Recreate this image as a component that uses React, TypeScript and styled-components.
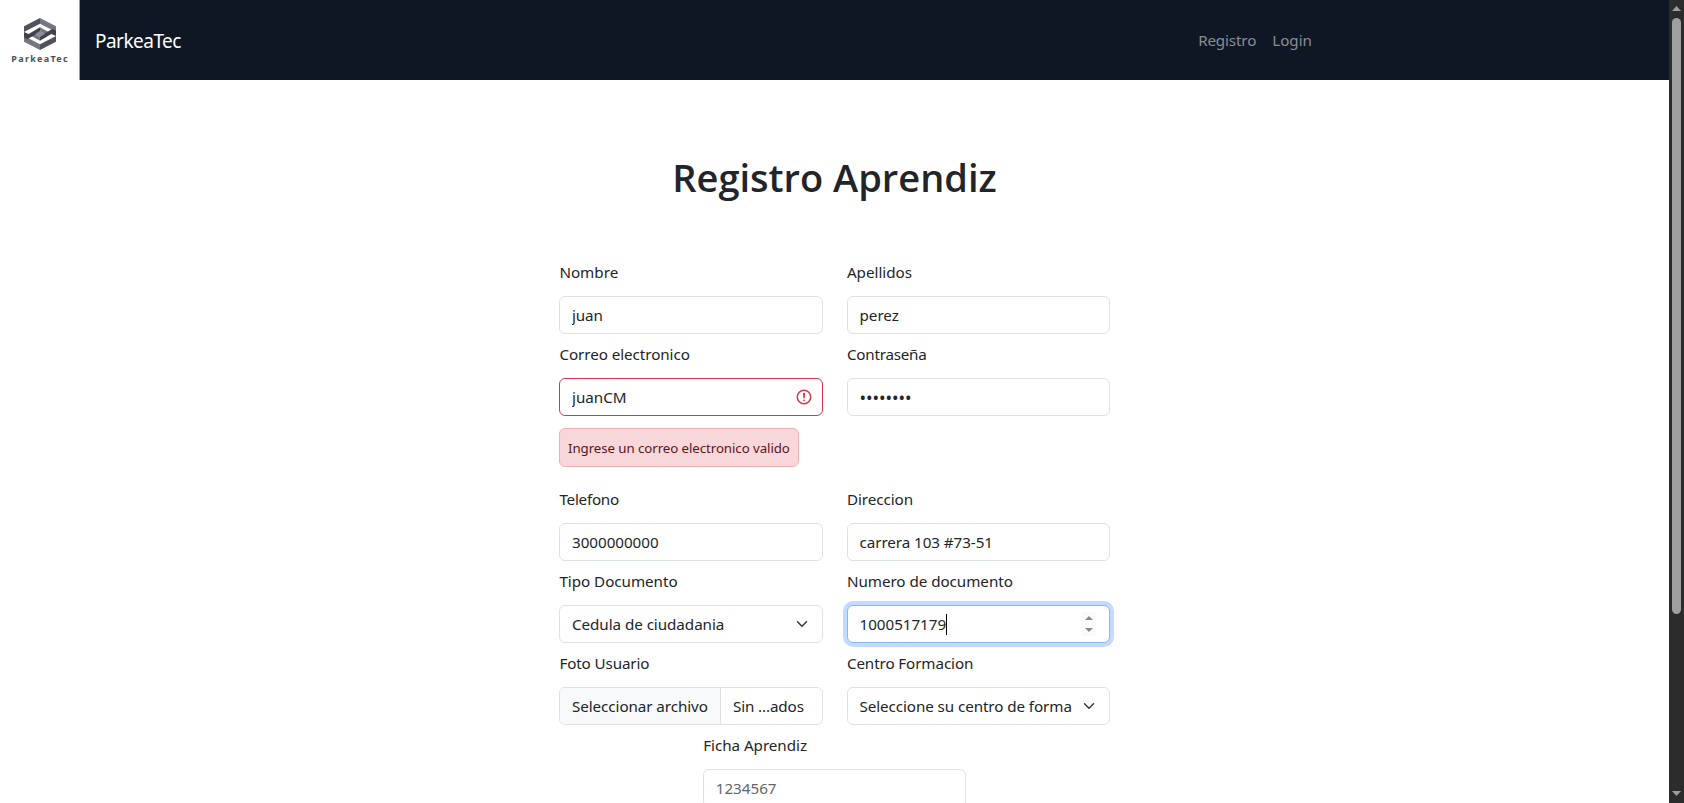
import React from 'react';
import styled, { createGlobalStyle, css } from 'styled-components';

const GlobalStyle = createGlobalStyle`
  *, *::before, *::after { box-sizing: border-box; }
  html, body { margin: 0; height: 803px; overflow: hidden; background: #fff; }
  body {
    font-family: "Noto Sans", "Open Sans", sans-serif;
    font-size: 15.2px;
    line-height: 24px;
    color: #212529;
  }
`;

const Window = styled.div`
  display: grid;
  grid-template-columns: 1fr 15px;
  height: 803px;
  overflow: hidden;
`;

const Page = styled.div`
  height: 803px;
  overflow: hidden;
  background: #fff;
`;

const Navbar = styled.header`
  display: flex;
  align-items: center;
  height: 80px;
  background: #101724;
`;

const Logo = styled.a`
  display: flex;
  flex-direction: column;
  align-items: center;
  width: 80px;
  height: 80px;
  padding-top: 18px;
  background: #fff;
  border-right: 1px solid #9a9da3;
`;

const LogoName = styled.span`
  margin-top: 2px;
  font-size: 9px;
  line-height: 14px;
  font-weight: 700;
  color: #4b4e57;
  letter-spacing: 1.3px;
  margin-right: -1.3px;
`;

const Tracked = styled.span<{ $track?: number }>`
  letter-spacing: ${(p) => p.$track ?? 0}px;
  white-space: pre;
`;

const Brand = styled.a`
  margin-left: 15px;
  padding-top: 2px;
  font-size: 19px;
  line-height: 30px;
  color: #fff;
`;

const Nav = styled.nav`
  display: flex;
  gap: 16px;
  margin-left: auto;
  margin-right: 357px;
`;

const NavLink = styled.a`
  color: #898d93;
`;

const Title = styled.h1`
  margin: 73px 0 59px;
  font-family: "Open Sans", "Noto Sans", sans-serif;
  font-size: 38px;
  line-height: 48px;
  font-weight: 600;
  text-align: center;
`;

const Form = styled.form`
  display: flex;
  flex-wrap: wrap;
  justify-content: center;
  align-items: flex-start;
  column-gap: 24px;
  width: 551px;
  margin: 0 auto;
`;

const Field = styled.div`
  display: flex;
  flex-direction: column;
  width: 263.5px;
  padding-bottom: 8px;
`;

const Label = styled.label`
  margin-bottom: 12px;
  padding-left: 0.4px;
`;

type State = 'normal' | 'invalid' | 'focused';

const Control = styled.div<{ $state?: State; $muted?: boolean }>`
  display: flex;
  align-items: center;
  height: 38px;
  padding: 0 12px;
  border: 1px solid #dee2e6;
  border-radius: 6px;
  background: #fff;
  color: ${(p) => (p.$muted ? '#62676c' : '#212529')};
  overflow: hidden;
  ${(p) => p.$state === 'invalid' && css`
    border-color: #dc3545;
    padding-right: 9px;
  `}
  ${(p) => p.$state === 'focused' && css`
    border-color: #86b7fe;
    box-shadow: 0 0 0 4px #c2dbfe;
  `}
`;

const Value = styled.div<{ $masked?: boolean }>`
  display: flex;
  align-items: center;
  flex: 1;
  min-width: 0;
  overflow: hidden;
  height: 24px;
  ${(p) => p.$masked && css`font-size: 17.4px;`}
`;

const Caret = styled.i`
  width: 1px;
  height: 21px;
  background: #000;
`;

const Spinner = styled.div`
  display: flex;
  flex-direction: column;
  align-items: center;
  justify-content: center;
  gap: 8px;
  width: 15px;
  height: 24px;
  margin-right: 1px;
  background: #fafafa;
`;

const Arrow = styled.i<{ $down?: boolean; $color: string }>`
  border: 4px solid transparent;
  ${(p) => (p.$down
    ? css`border-top-color: ${p.$color}; border-bottom-width: 0;`
    : css`border-bottom-color: ${p.$color}; border-top-width: 0;`)}
`;

const FileButton = styled.span`
  align-self: stretch;
  display: flex;
  align-items: center;
  width: 161px;
  margin: 0 12px 0 -12px;
  padding-left: 12px;
  flex: none;
  background: #f8f9fa;
  border-right: 1px solid #dee2e6;
`;

const Alert = styled.div`
  display: flex;
  align-items: center;
  width: 240px;
  height: 39px;
  margin: 12px 0;
  padding: 0 8px;
  border: 1px solid #f1aeb5;
  border-radius: 6px;
  background: #f8d7da;
  color: #58151c;
  font-size: 13.3px;
`;

const Scrollbar = styled.div`
  display: flex;
  flex-direction: column;
  align-items: center;
  height: 803px;
  padding: 6px 0 7px;
  background: #2c2c2c;
`;

const Thumb = styled.div`
  width: 9px;
  height: 596px;
  margin: 7px 0 auto;
  border-radius: 5px;
  background: #9f9f9f;
`;

const ScrollArrow = styled.svg`
  display: block;
  width: 9px;
  height: 5px;
  fill: #9f9f9f;
`;

function LogoMark() {
  return (
    <svg width="32" height="32" viewBox="0 0 96 96">
      <polygon points="48,0 0,25 0,42 48,17" fill="#50535d" />
      <polygon points="48,0 96,25 96,42 48,17" fill="#74777f" />
      <polygon points="0,54 48,79 48,96 0,71" fill="#74777f" />
      <polygon points="96,54 48,79 48,96 96,71" fill="#50535d" />
      <polygon points="48,28 78,44 66,50 48,40" fill="#74777f" />
      <polygon points="48,68 18,52 30,46 48,56" fill="#74777f" />
      <polygon points="0,42 14,48 48,28 48,42 10,64 0,58" fill="#40434e" />
      <polygon points="96,54 82,48 48,68 48,54 86,32 96,38" fill="#40434e" />
      <polygon points="48,39 62,48 48,57 34,48" fill="#8b8d94" />
    </svg>
  );
}

function Chevron() {
  return (
    <svg width="16" height="12" viewBox="0 0 16 16">
      <path d="m2 5 6 6 6-6" fill="none" stroke="#343a40" strokeWidth="2" strokeLinecap="round" strokeLinejoin="round" />
    </svg>
  );
}

function ErrorMark() {
  return (
    <svg width="18" height="18" viewBox="0 0 12 12" fill="none" stroke="#dc3545">
      <circle cx="6" cy="6" r="4.5" />
      <path strokeLinejoin="round" d="M5.8 3.6h.4L6 6.5z" />
      <circle cx="6" cy="8.2" r=".6" fill="#dc3545" stroke="none" />
    </svg>
  );
}

type FieldProps = {
  label: string;
  labelTrack?: number;
  value: string;
  track?: number;
  state?: State;
  muted?: boolean;
  masked?: boolean;
  before?: React.ReactNode;
  caret?: boolean;
  after?: React.ReactNode;
  note?: React.ReactNode;
};

function FormField({ label, labelTrack, value, track, state, muted, masked, before, caret, after, note }: FieldProps) {
  return (
    <Field>
      <Label><Tracked $track={labelTrack}>{label}</Tracked></Label>
      <Control $state={state} $muted={muted}>
        {before}
        <Value $masked={masked}>
          <Tracked $track={track}>{value}</Tracked>
          {caret && <Caret />}
        </Value>
        {after}
      </Control>
      {note}
    </Field>
  );
}

export default function App() {
  return (
    <Window>
      <GlobalStyle />
      <Page>
        <Navbar>
          <Logo>
            <LogoMark />
            <LogoName>ParkeaTec</LogoName>
          </Logo>
          <Brand><Tracked $track={-0.52}>ParkeaTec</Tracked></Brand>
          <Nav>
            <NavLink><Tracked $track={-0.14}>Registro</Tracked></NavLink>
            <NavLink>Login</NavLink>
          </Nav>
        </Navbar>
        <main>
          <Title>Registro Aprendiz</Title>
          <Form>
            <FormField label="Nombre" value="juan" track={-0.1} />
            <FormField label="Apellidos" value="perez" />
            <FormField
              label="Correo electronico"
              labelTrack={-0.06}
              value="juanCM"
              state="invalid"
              after={<ErrorMark />}
              note={<Alert><Tracked $track={-0.08}>Ingrese un correo electronico valido</Tracked></Alert>}
            />
            <FormField label="Contraseña" labelTrack={-0.22} value="••••••••" track={-0.05} masked />
            <FormField label="Telefono" labelTrack={-0.23} value="3000000000" track={-0.03} />
            <FormField label="Direccion" labelTrack={-0.05} value="carrera 103 #73-51" track={-0.06} />
            <FormField label="Tipo Documento" labelTrack={-0.03} value="Cedula de ciudadania" track={-0.05} after={<Chevron />} />
            <FormField
              label="Numero de documento"
              labelTrack={-0.04}
              value="1000517179"
              track={-0.03}
              state="focused"
              caret
              after={<Spinner><Arrow $color="#8a8a8a" /><Arrow $down $color="#8a8a8a" /></Spinner>}
            />
            <FormField
              label="Foto Usuario"
              labelTrack={-0.11}
              value="Sin ...ados"
              track={-0.12}
              before={<FileButton><Tracked $track={-0.07}>Seleccionar archivo</Tracked></FileButton>}
            />
            <FormField label="Centro Formacion" labelTrack={-0.1} value="Seleccione su centro de forma" track={-0.08} after={<Chevron />} />
            <FormField label="Ficha Aprendiz" labelTrack={-0.03} value="1234567" muted />
          </Form>
        </main>
      </Page>
      <Scrollbar>
        <ScrollArrow viewBox="0 0 9 5"><path d="M4.5 0 9 5H0z" /></ScrollArrow>
        <Thumb />
        <ScrollArrow viewBox="0 0 9 5"><path d="M0 0h9L4.5 5z" /></ScrollArrow>
      </Scrollbar>
    </Window>
  );
}
